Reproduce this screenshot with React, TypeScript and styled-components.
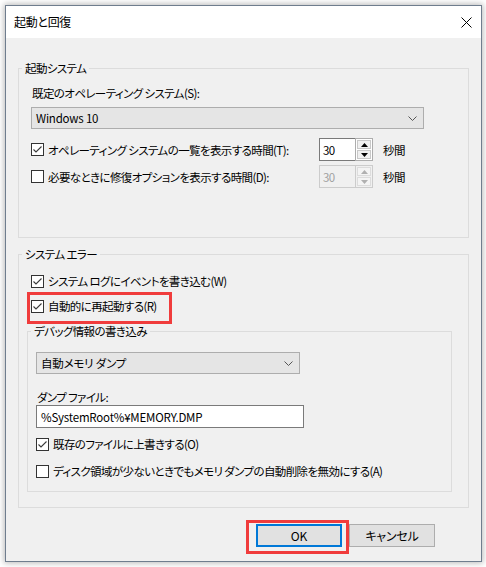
import React from 'react';
import styled, { createGlobalStyle } from 'styled-components';

const GlobalStyle = createGlobalStyle`
  html, body {
    margin: 0;
    background: #ffffff;
  }
  body {
    font-family: 'Noto Sans CJK JP', 'Noto Sans', sans-serif;
    font-size: 11.5px;
    letter-spacing: -0.6px;
    line-height: 16px;
    color: #000000;
    font-feature-settings: 'palt';
  }
`;

const WindowFrame = styled.div`
  box-sizing: border-box;
  width: 477px;
  height: 557px;
  margin: 5px;
  border: 1px solid #6f7d8e;
  background: #f0f0f0;
  box-shadow: 0 0 6px 1px rgba(0, 0, 0, 0.28);
  display: flex;
  flex-direction: column;
`;

const TitleBar = styled.div`
  height: 32px;
  flex-shrink: 0;
  background: #ffffff;
  display: flex;
  align-items: center;
  justify-content: space-between;
  padding-left: 8px;
`;

const TitleText = styled.span`
  font-size: 12px;
  letter-spacing: -0.3px;
`;

const CloseButton = styled.div`
  width: 30px;
  height: 32px;
  display: flex;
  align-items: center;
  justify-content: center;
`;

const Body = styled.div`
  flex: 1;
  display: flex;
  flex-direction: column;
  padding: 0 12px;
`;

const GroupBox = styled.fieldset<{ $top: number; $left?: number; $width?: number }>`
  box-sizing: border-box;
  margin: ${({ $top }) => $top}px 0 0 ${({ $left }) => $left || 0}px;
  padding: 0;
  min-width: 0;
  width: ${({ $width }) => ($width ? `${$width}px` : 'auto')};
  border: 1px solid #dcdcdc;
`;

const Legend = styled.legend`
  margin-left: 3px;
  padding: 0 3px;
  line-height: 16px;
`;

const GroupContent = styled.div<{ $pad: string }>`
  display: flex;
  flex-direction: column;
  align-items: flex-start;
  padding: ${({ $pad }) => $pad};
`;

const FieldLabel = styled.div<{ $mt?: number }>`
  margin-top: ${({ $mt }) => $mt || 0}px;
  margin-left: 1px;
  line-height: 16px;
`;

const ComboBox = styled.div<{ $width: number; $mt: number }>`
  box-sizing: border-box;
  width: ${({ $width }) => $width}px;
  height: 22px;
  margin-top: ${({ $mt }) => $mt}px;
  border: 1px solid #adadad;
  background: #e5e5e5;
  display: flex;
  align-items: center;
  justify-content: space-between;
  padding: 0 6px 0 4px;
  letter-spacing: -0.2px;
`;

const TextBox = styled.div<{ $width: number }>`
  box-sizing: border-box;
  width: ${({ $width }) => $width}px;
  height: 23px;
  border: 1px solid #7a7a7a;
  background: #ffffff;
  display: flex;
  align-items: center;
  padding-left: 4px;
  letter-spacing: -0.2px;
`;

const CheckRow = styled.div<{ $mt?: number; $ml?: number }>`
  position: relative;
  display: flex;
  align-items: center;
  gap: 4px;
  height: 16px;
  margin-top: ${({ $mt }) => $mt || 0}px;
  margin-left: ${({ $ml }) => $ml || 0}px;
  white-space: nowrap;
`;

const Box = styled.span`
  box-sizing: border-box;
  flex-shrink: 0;
  width: 13px;
  height: 13px;
  border: 1px solid #333333;
  background: #ffffff;
  display: flex;
  align-items: center;
  justify-content: center;
`;

const SpinRow = styled.div<{ $mt: number }>`
  display: grid;
  grid-template-columns: 278px 54px auto;
  column-gap: 10px;
  align-items: center;
  height: 23px;
  margin-top: ${({ $mt }) => $mt}px;
`;

const Spin = styled.div<{ $disabled?: boolean }>`
  display: flex;
  width: 54px;
  height: 23px;
  box-sizing: border-box;
  background: ${({ $disabled }) => ($disabled ? '#f0f0f0' : '#ffffff')};
  color: ${({ $disabled }) => ($disabled ? '#a0a0a0' : '#000000')};
`;

const SpinField = styled.div<{ $disabled?: boolean }>`
  box-sizing: border-box;
  width: 36px;
  height: 23px;
  border: 1px solid ${({ $disabled }) => ($disabled ? '#cccccc' : '#7a7a7a')};
  border-right: none;
  display: flex;
  align-items: center;
  padding-left: 3px;
`;

const SpinButtons = styled.div<{ $disabled?: boolean }>`
  box-sizing: border-box;
  width: 18px;
  height: 23px;
  border: 1px solid ${({ $disabled }) => ($disabled ? '#cccccc' : '#adadad')};
  display: flex;
  flex-direction: column;
  padding: 1px;
  gap: 1px;
`;

const SpinButton = styled.div<{ $disabled?: boolean }>`
  flex: 1;
  box-sizing: border-box;
  border: 1px solid ${({ $disabled }) => ($disabled ? '#dcdcdc' : '#c8c8c8')};
  background: ${({ $disabled }) => ($disabled ? '#f4f4f4' : '#f0f0f0')};
  display: flex;
  align-items: center;
  justify-content: center;
`;

const Highlight = styled.div<{ $top: number; $left: number; $w: number; $h: number }>`
  position: absolute;
  top: ${({ $top }) => $top}px;
  left: ${({ $left }) => $left}px;
  width: ${({ $w }) => $w}px;
  height: ${({ $h }) => $h}px;
  box-sizing: border-box;
  border: 3px solid #f03c3c;
  pointer-events: none;
`;

const ButtonRow = styled.div`
  display: flex;
  justify-content: flex-end;
  gap: 7px;
  margin-top: 16px;
  padding-right: 34px;
`;

const ButtonWrap = styled.div`
  position: relative;
`;

const PushButton = styled.div<{ $default?: boolean }>`
  box-sizing: border-box;
  width: 86px;
  height: 23px;
  background: #e1e1e1;
  border: ${({ $default }) => ($default ? '2px solid #0078d7' : '1px solid #adadad')};
  display: flex;
  align-items: center;
  justify-content: center;
  font-size: 12px;
  letter-spacing: -0.2px;
`;

const Chevron = () => (
  <svg width="9" height="5" viewBox="0 0 9 5">
    <polyline points="0.5,0.5 4.5,4.5 8.5,0.5" fill="none" stroke="#555" strokeWidth="1" />
  </svg>
);

const CheckMark = () => (
  <svg width="11" height="11" viewBox="0 0 11 11">
    <polyline points="1.5,5.5 4,8 9.5,2.5" fill="none" stroke="#3a3a3a" strokeWidth="1.1" />
  </svg>
);

const Arrow = ({ up, color }: { up?: boolean; color: string }) => (
  <svg width="7" height="4" viewBox="0 0 7 4">
    <polygon points={up ? '0,4 7,4 3.5,0' : '0,0 7,0 3.5,4'} fill={color} />
  </svg>
);

const Check = ({ checked, children, mt, ml, highlight }: {
  checked?: boolean;
  children: React.ReactNode;
  mt?: number;
  ml?: number;
  highlight?: boolean;
}) => (
  <CheckRow $mt={mt} $ml={ml}>
    <Box>{checked && <CheckMark />}</Box>
    <span>{children}</span>
    {highlight && <Highlight $top={-6} $left={-4} $w={145} $h={32} />}
  </CheckRow>
);

const SpinBox = ({ disabled }: { disabled?: boolean }) => {
  const arrowColor = disabled ? '#b0b0b0' : '#000000';
  return (
    <Spin $disabled={disabled}>
      <SpinField $disabled={disabled}>30</SpinField>
      <SpinButtons $disabled={disabled}>
        <SpinButton $disabled={disabled}>
          <Arrow up color={arrowColor} />
        </SpinButton>
        <SpinButton $disabled={disabled}>
          <Arrow color={arrowColor} />
        </SpinButton>
      </SpinButtons>
    </Spin>
  );
};

const App = function App() {
  return (
    <>
      <GlobalStyle />
      <WindowFrame>
        <TitleBar>
          <TitleText>起動と回復</TitleText>
          <CloseButton>
            <svg width="11" height="11" viewBox="0 0 11 11">
              <path d="M0.5 0.5 L10.5 10.5 M10.5 0.5 L0.5 10.5" stroke="#000" strokeWidth="1" />
            </svg>
          </CloseButton>
        </TitleBar>
        <Body>
          <GroupBox $top={22}>
            <Legend>起動システム</Legend>
            <GroupContent $pad="9px 12px 49px">
              <FieldLabel>既定のオペレーティング システム(S):</FieldLabel>
              <ComboBox $width={393} $mt={6}>
                <span>Windows 10</span>
                <Chevron />
              </ComboBox>
              <SpinRow $mt={9}>
                <Check checked>オペレーティング システムの一覧を表示する時間(T):</Check>
                <SpinBox />
                <span>秒間</span>
              </SpinRow>
              <SpinRow $mt={4}>
                <Check>必要なときに修復オプションを表示する時間(D):</Check>
                <SpinBox disabled />
                <span>秒間</span>
              </SpinRow>
            </GroupContent>
          </GroupBox>

          <GroupBox $top={8}>
            <Legend>システム エラー</Legend>
            <GroupContent $pad="11px 12px 15px 8px">
              <Check checked ml={4}>システム ログにイベントを書き込む(W)</Check>
              <Check checked ml={4} mt={9} highlight>自動的に再起動する(R)</Check>
              <GroupBox $top={9} $width={425}>
                <Legend>デバッグ情報の書き込み</Legend>
                <GroupContent $pad="13px 8px 12px">
                  <ComboBox $width={264} $mt={0}>
                    <span>自動メモリ ダンプ</span>
                    <Chevron />
                  </ComboBox>
                  <FieldLabel $mt={15}>ダンプ ファイル:</FieldLabel>
                  <TextBox $width={268}>%SystemRoot%¥MEMORY.DMP</TextBox>
                  <Check checked mt={8}>既存のファイルに上書きする(O)</Check>
                  <Check mt={11}>ディスク領域が少ないときでもメモリ ダンプの自動削除を無効にする(A)</Check>
                </GroupContent>
              </GroupBox>
            </GroupContent>
          </GroupBox>

          <ButtonRow>
            <ButtonWrap>
              <PushButton $default>OK</PushButton>
              <Highlight $top={-4} $left={-10} $w={103} $h={34} />
            </ButtonWrap>
            <PushButton>キャンセル</PushButton>
          </ButtonRow>
        </Body>
      </WindowFrame>
    </>
  );
};

App.displayName = 'App';
export default App;
